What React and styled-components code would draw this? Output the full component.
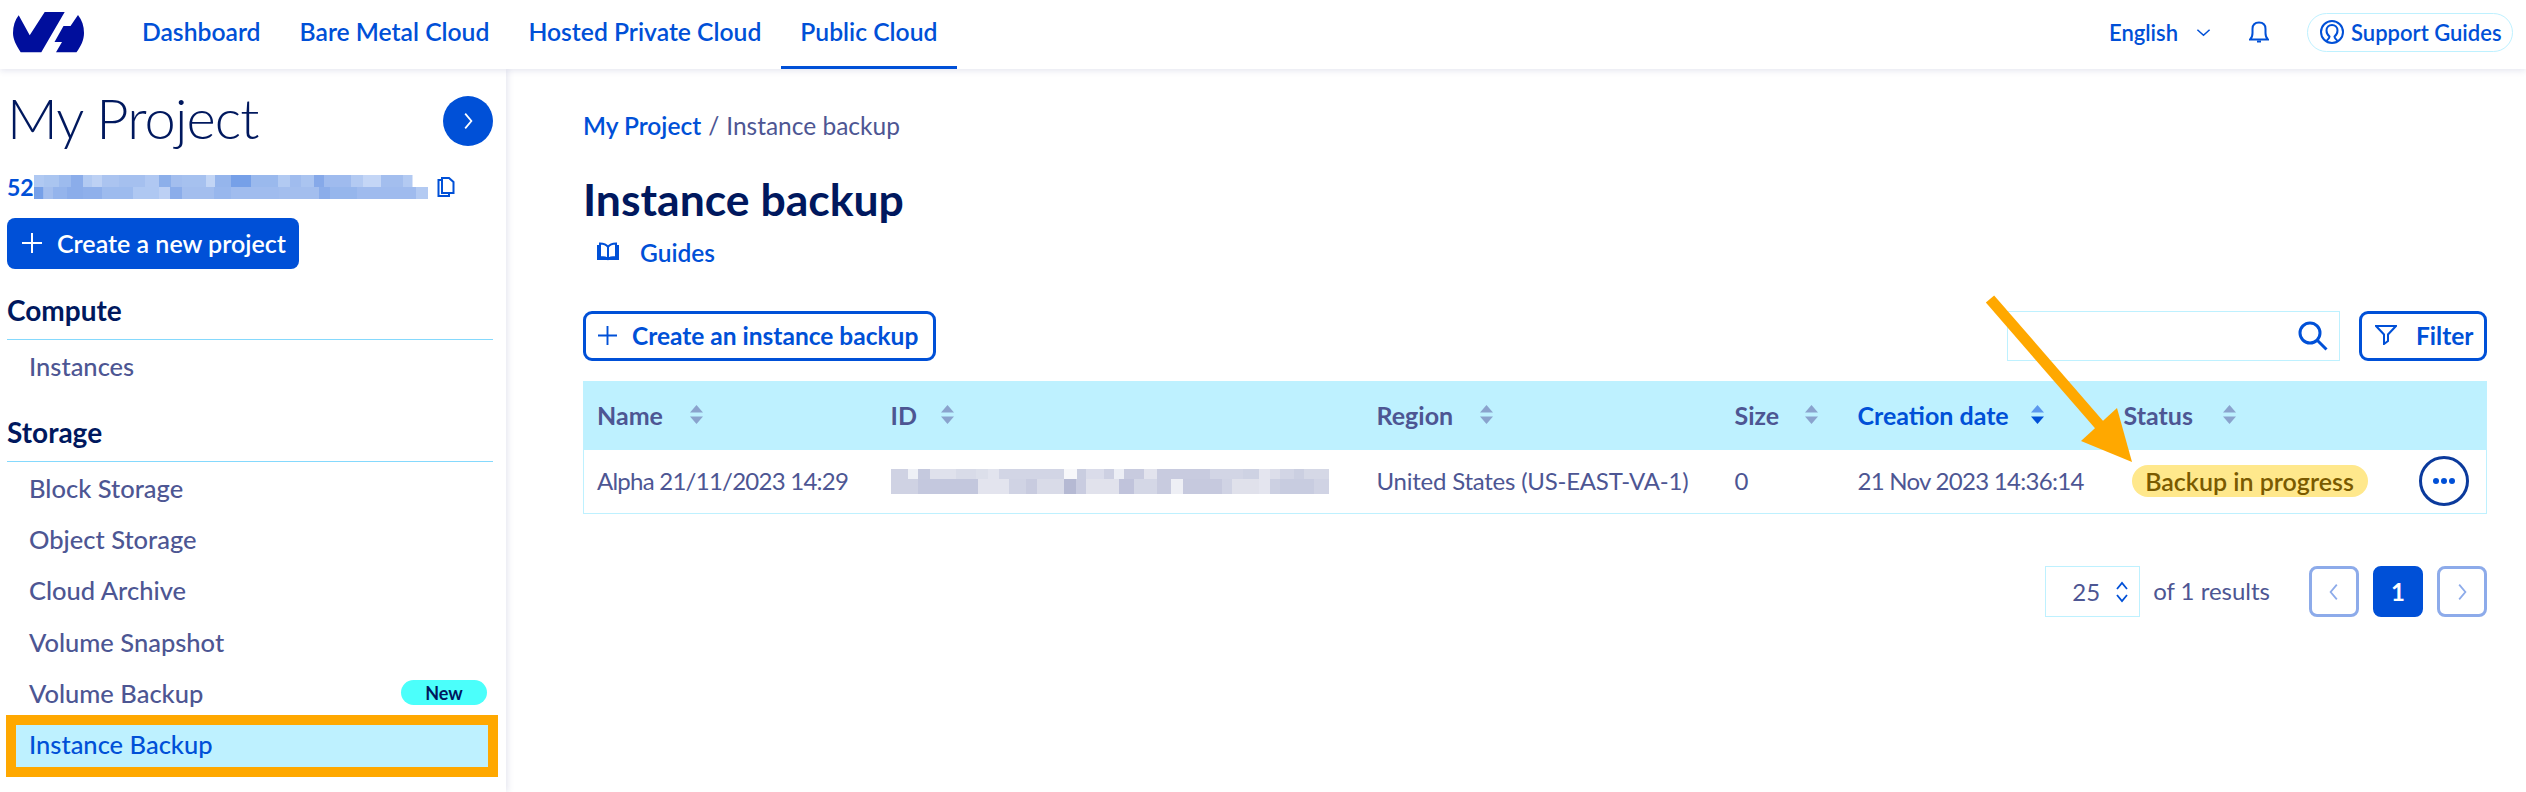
import React from 'react';
import styled, { createGlobalStyle } from 'styled-components';

const BLUE = '#0050d7';
const NAVY = '#00185e';
const SLATE = '#4d5693';
const SKY = '#bef1ff';
const ORANGE = '#ffa800';

const Global = createGlobalStyle`
  html, body { margin: 0; padding: 0; background: #fff; }
  body { font-family: Lato, "Noto Sans", sans-serif; color: ${SLATE}; overflow: hidden; }
  * { box-sizing: border-box; }
`;

const Page = styled.div`
  position: relative;
  width: 2526px;
  height: 792px;
  overflow: hidden;
`;

const TopBar = styled.header`
  position: relative;
  z-index: 2;
  display: flex;
  align-items: center;
  height: 69px;
  padding: 0 13px;
  background: #fff;
  box-shadow: 0 2px 6px rgba(77, 86, 147, 0.14);
`;

const Logo = styled.svg`
  width: 71px;
  height: 42px;
  margin: 0 38.5px 4px 0;
  flex: none;
`;

const NavItem = styled.a`
  display: flex;
  align-items: center;
  height: 69px;
  padding: 0 19.5px 3px;
  font-size: 24.7px;
  font-weight: 600;
  color: ${BLUE};
  border-bottom: 3px solid ${(p) => (p.$active ? BLUE : 'transparent')};
`;

const TopRight = styled.div`
  display: flex;
  align-items: center;
  margin-left: auto;
  padding-bottom: 5px;
`;

const Lang = styled.span`
  font-size: 22px;
  font-weight: 600;
  color: ${BLUE};
  display: flex;
  align-items: center;
  gap: 18px;
`;

const BellIcon = styled.svg`
  margin: 0 38px;
`;

const Pill = styled.a`
  display: flex;
  align-items: center;
  gap: 7px;
  height: 39px;
  width: 206px;
  padding-left: 12px;
  border: 1px solid ${SKY};
  border-radius: 20px;
  font-size: 22px;
  font-weight: 600;
  color: ${BLUE};
`;

const Body = styled.div`
  display: flex;
  height: 723px;
`;

const Side = styled.aside`
  width: 506px;
  flex: none;
  padding: 0 13px 0 7px;
  box-shadow: 2px 0 6px rgba(77, 86, 147, 0.14);
`;

const ProjectRow = styled.div`
  display: flex;
  align-items: center;
  justify-content: space-between;
  height: 51px;
  margin-top: 26px;
`;

const ProjectName = styled.h1`
  margin: -6px 0 0;
  font-size: 56px;
  font-weight: 300;
  letter-spacing: -0.9px;
  color: ${NAVY};
`;

const RoundBtn = styled.span`
  width: 50px;
  height: 50px;
  border-radius: 50%;
  background: ${BLUE};
  display: flex;
  align-items: center;
  justify-content: center;
`;

const IdRow = styled.div`
  display: flex;
  align-items: center;
  height: 24px;
  margin-top: 29px;
  font-size: 23px;
  font-weight: 700;
  color: ${BLUE};
`;

const CopyIcon = styled.svg`
  margin-left: 9px;
`;

const SideCreate = styled.a`
  display: inline-flex;
  align-items: center;
  gap: 15px;
  width: 292px;
  height: 51px;
  margin-top: 19px;
  padding: 0 0 2px 15px;
  border-radius: 8px;
  background: ${BLUE};
  color: #fff;
  font-size: 25px;
  font-weight: 600;
`;

const GroupTitle = styled.div`
  display: flex;
  align-items: center;
  height: 58px;
  margin-top: ${(p) => p.$top}px;
  padding: 0 0 2px 0;
  border-bottom: 1px solid #85d9fd;
  font-size: 28px;
  font-weight: 700;
  color: ${NAVY};
`;

const SideItem = styled.a`
  display: flex;
  align-items: center;
  justify-content: space-between;
  height: ${(p) => (p.$active ? 42 : 51.25)}px;
  padding: ${(p) => (p.$active ? '0 0 3px 13px' : '0 6px 0 22px')};
  margin: ${(p) => (p.$active ? '6px 5px 0 9px' : 0)};
  font-size: 25.5px;
  font-weight: 500;
  color: ${(p) => (p.$active ? BLUE : SLATE)};
  background: ${(p) => (p.$active ? SKY : 'transparent')};
  box-shadow: ${(p) => (p.$active ? `0 0 0 10px ${ORANGE}` : 'none')};
`;

const NewBadge = styled.span`
  display: flex;
  align-items: center;
  justify-content: center;
  width: 86px;
  height: 25px;
  border-radius: 13px;
  background: #4bfffb;
  color: ${NAVY};
  font-size: 18px;
  font-weight: 700;
`;

const Main = styled.main`
  flex: 1;
  padding: 41px 39px 0 77px;
`;

const Crumbs = styled.div`
  height: 30px;
  display: flex;
  align-items: center;
  gap: 7px;
  font-size: 24.5px;
`;

const CrumbLink = styled.a`
  color: ${BLUE};
  font-weight: 600;
`;

const PageTitle = styled.h2`
  margin: 32px 0 0;
  font-size: 44.5px;
  line-height: 54px;
  font-weight: 700;
  color: ${NAVY};
`;

const GuideLink = styled.a`
  display: flex;
  align-items: center;
  gap: 21px;
  height: 30px;
  margin: 11px 0 0 14px;
  font-size: 24.5px;
  font-weight: 600;
  color: ${BLUE};
`;

const Toolbar = styled.div`
  display: flex;
  align-items: center;
  height: 50px;
  margin-top: 44px;
`;

const OutlineBtn = styled.a`
  display: flex;
  align-items: center;
  height: 50px;
  width: ${(p) => p.$w}px;
  gap: ${(p) => p.$gap}px;
  padding: 0 0 2px ${(p) => p.$pad}px;
  border: 3px solid ${BLUE};
  border-radius: 9px;
  font-size: 24.5px;
  font-weight: 700;
  color: ${BLUE};
`;

const Search = styled.div`
  display: flex;
  align-items: center;
  justify-content: flex-end;
  width: 333px;
  height: 50px;
  margin: 0 19px 0 auto;
  padding-right: 11px;
  border: 1px solid ${SKY};
`;

const Table = styled.table`
  width: 100%;
  margin-top: 20px;
  border-collapse: collapse;
  table-layout: fixed;
  border: 1px solid ${SKY};
`;

const Head = styled.th`
  height: 68px;
  padding: 0 0 2px 13px;
  background: ${SKY};
  text-align: left;
  font-size: 25px;
  font-weight: 700;
  color: ${(p) => (p.$sorted ? BLUE : SLATE)};
`;

const HeadInner = styled.span`
  display: inline-flex;
  align-items: center;
  gap: ${(p) => p.$gap}px;
`;

const Cell = styled.td`
  height: 64px;
  padding: 0 0 ${(p) => (p.$text ? 2 : 0)}px 13px;
  font-size: 24px;
  letter-spacing: ${(p) => p.$spacing || 0}px;
  color: ${SLATE};
`;

const StatusBadge = styled.span`
  display: inline-flex;
  align-items: center;
  justify-content: center;
  width: 236px;
  height: 32px;
  margin-left: 8px;
  padding-bottom: 1px;
  border-radius: 16px;
  background: #ffe88c;
  color: #7a5a00;
  font-size: 25px;
  font-weight: 600;
`;

const DotsBtn = styled.span`
  display: flex;
  align-items: center;
  justify-content: center;
  width: 50px;
  height: 50px;
  border: 3px solid #0b3a9c;
  border-radius: 50%;
`;

const Pager = styled.div`
  display: flex;
  align-items: center;
  justify-content: flex-end;
  height: 51px;
  margin-top: 52px;
`;

const PageSize = styled.div`
  display: flex;
  align-items: center;
  justify-content: flex-end;
  gap: 15px;
  width: 95px;
  height: 51px;
  padding-right: 10px;
  border: 1px solid ${SKY};
  font-size: 24px;
`;

const ResultCount = styled.span`
  margin: 0 39px 2px 13px;
  font-size: 24px;
`;

const PageBtn = styled.span`
  display: flex;
  align-items: center;
  justify-content: center;
  width: 50px;
  height: 51px;
  margin-left: ${(p) => p.$left}px;
  border: 3px solid ${(p) => (p.$on ? BLUE : '#8dabea')};
  border-radius: 8px;
  background: ${(p) => (p.$on ? BLUE : '#fff')};
  color: #fff;
  font-size: 24px;
  font-weight: 700;
`;

const MosaicSvg = styled.svg`
  display: block;
`;

const Annotation = styled.svg`
  position: absolute;
  left: 0;
  top: 0;
  z-index: 3;
  pointer-events: none;
`;

const sideTop = [
  [28, '#b0c9f2'], [47, '#aac5f0'], [36, '#9dbbee'], [36, '#8badea'], [27, '#b2caf2'], [30, '#bdd1f4'],
  [51, '#abc4f0'], [78, '#a5c0ef'], [42, '#b0c8f2'], [36, '#8cafea'], [33, '#a3beee'], [72, '#a6c1ef'],
  [27, '#c2d5f5'], [48, '#95b5ec'], [60, '#76a0e8'], [81, '#9ab9ed'], [36, '#b2caf2'], [33, '#a0bcee'],
  [39, '#aac4f0'], [30, '#86a9e9'], [81, '#9fbbee'], [36, '#b3caf2'], [54, '#c4d6f6'], [66, '#a3beee'], [27, '#b3caf2'],
];
const sideBottom = [
  [28, '#76a0e8'], [29, '#a3beee'], [42, '#94b4ec'], [48, '#8badea'], [57, '#8fb0eb'], [93, '#9dbbee'],
  [78, '#afc8f2'], [33, '#bcd0f4'], [36, '#8badea'], [96, '#a3beee'], [51, '#98b7ed'], [144, '#a0bcee'],
  [120, '#a3beee'], [33, '#8badea'], [81, '#96b6ec'], [177, '#9fbbee'], [36, '#b3caf2'],
];
const rowTop = [
  [51, '#cfd2e3'], [30, '#eef0f6'], [36, '#c5c9de'], [78, '#dfe1ec'], [60, '#d8dbe8'], [36, '#dcdfea'],
  [33, '#e2e4ee'], [195, '#d2d5e5'], [39, '#f7f7fa'], [27, '#c9cde0'], [54, '#dadcea'], [30, '#cdd0e2'],
  [30, '#eceef5'], [60, '#c8cbdf'], [39, '#e2e3ed'], [159, '#c8cbdf'], [99, '#d2d5e5'], [48, '#ced2e3'],
  [33, '#e4e5ef'], [30, '#dcdeea'], [42, '#d2d5e5'], [30, '#cbcfe1'], [75, '#d5d8e6'],
];
const rowBottom = [
  [81, '#cfd2e3'], [66, '#c4c8de'], [114, '#c3c7dd'], [93, '#e3e4ee'], [51, '#d0d3e4'], [33, '#c8cbdf'],
  [81, '#d9dbe8'], [36, '#b5b9d3'], [30, '#c9cce0'], [99, '#e1e2ec'], [45, '#c0c3db'], [69, '#d4d7e6'],
  [42, '#c8cbdf'], [36, '#eeeff5'], [117, '#c6c9de'], [30, '#d0d3e4'], [81, '#e0e1eb'], [33, '#e4e5ef'],
  [30, '#ccd0e2'], [102, '#c8cce0'], [45, '#d0d3e4'],
];

// the blurred-out identifiers, drawn as two rows of tiles
function Mosaic({ top, bottom, width, height, split }) {
  const tiles = (row, y, h) => {
    let x = 0;
    return row.map(([w, fill], i) => {
      const rect = <rect key={`${y}-${i}`} x={x / 3} y={y} width={w / 3 + 0.5} height={h} fill={fill} />;
      x += w;
      return rect;
    });
  };
  return (
    <MosaicSvg width={width} height={height} viewBox={`0 0 ${width} ${height}`}>
      {tiles(top, 0, split)}
      {tiles(bottom, split, height - split)}
    </MosaicSvg>
  );
}

const OvhLogo = () => (
  <Logo viewBox="0 0 71 42">
    <path
      fill="#000e9c"
      d="M5.7 3.3 L16.7 23.3 L31.7 0 L51.7 0 L28.3 40.3 L7.7 40.3 C3 33 0 27 0 21 C0 14 2 8 5.7 3.3 Z"
    />
    <path
      fill="#000e9c"
      d="M65 3 L57.5 14 L50.5 14 L41.5 30 L49 30 L43 40.3 L63.5 40.3 C68 34 71 28 71 21 C71 14 69 8 65 3 Z"
    />
  </Logo>
);

const Plus = ({ color, size }) => (
  <svg width={size} height={size} viewBox="0 0 20 20" fill="none" stroke={color} strokeWidth="2">
    <path d="M10 0v20M0 10h20" />
  </svg>
);

const Chevron = ({ dir, color, size }) => (
  <svg width={size} height={size} viewBox="0 0 16 16" fill="none" stroke={color} strokeWidth="1.6">
    {dir === 'right' && <path d="M5.5 1.5 L11 8 L5.5 14.5" />}
    {dir === 'left' && <path d="M10.5 1.5 L5 8 L10.5 14.5" />}
    {dir === 'down' && <path d="M1.5 5 L8 11 L14.5 5" />}
  </svg>
);

const Sort = ({ active }) => (
  <svg width="13" height="19" viewBox="0 0 13 19">
    <path d="M6.5 0 L13 7.5 H0 Z" fill={active ? '#5b98ee' : '#8aa3cd'} />
    <path d="M0 11.5 H13 L6.5 19 Z" fill={active ? BLUE : '#8aa3cd'} />
  </svg>
);

const columns = [
  ['Name', 294, 27], ['ID', 486, 24], ['Region', 358, 27], ['Size', 123, 26], ['Creation date', 266, 22, true], ['Status', 295, 30],
];

export default function App() {
  return (
    <Page>
      <Global />
      <TopBar>
        <OvhLogo />
        <NavItem>Dashboard</NavItem>
        <NavItem>Bare Metal Cloud</NavItem>
        <NavItem>Hosted Private Cloud</NavItem>
        <NavItem $active>Public Cloud</NavItem>
        <TopRight>
          <Lang>
            English
            <Chevron dir="down" color={BLUE} size={15} />
          </Lang>
          <BellIcon width="20" height="22" viewBox="0 0 20 22" fill="none" stroke={BLUE} strokeWidth="2">
            <path d="M1 18.5 C3 17 3.5 15 3.5 12 V8 C3.5 4 6 1.5 10 1.5 C14 1.5 16.5 4 16.5 8 V12 C16.5 15 17 17 19 18.5 Z" />
            <path d="M8 20.5 H12" />
          </BellIcon>
          <Pill>
            <svg width="24" height="24" viewBox="0 0 24 24" fill="none" stroke={BLUE} strokeWidth="2">
              <circle cx="12" cy="12" r="11" />
              <path d="M6.5 21 C8 19 9.5 18.5 9.5 16.5 C7.5 15 6.5 13 6.5 10.5 C6.5 7 9 5 12 5 C15 5 17.5 7 17.5 10.5 C17.5 13 16.5 15 14.5 16.5 C14.5 18.5 16 19 17.5 21" />
            </svg>
            Support Guides
          </Pill>
        </TopRight>
      </TopBar>
      <Body>
        <Side>
          <ProjectRow>
            <ProjectName>My Project</ProjectName>
            <RoundBtn>
              <Chevron dir="right" color="#fff" size={18} />
            </RoundBtn>
          </ProjectRow>
          <IdRow>
            52
            <Mosaic top={sideTop} bottom={sideBottom} width={394} height={24} split={12} />
            <CopyIcon width="18" height="20" viewBox="0 0 18 20" fill="none" stroke={BLUE} strokeWidth="2">
              <path d="M5 3 H1.5 V19 H12 V16" />
              <path d="M5 1 H12 L16.5 5 V16 H5 Z" />
            </CopyIcon>
          </IdRow>
          <SideCreate>
            <Plus color="#fff" size={20} />
            Create a new project
          </SideCreate>
          <GroupTitle $top={13}>Compute</GroupTitle>
          <SideItem>Instances</SideItem>
          <GroupTitle $top={13}>Storage</GroupTitle>
          <SideItem>Block Storage</SideItem>
          <SideItem>Object Storage</SideItem>
          <SideItem>Cloud Archive</SideItem>
          <SideItem>Volume Snapshot</SideItem>
          <SideItem>
            Volume Backup
            <NewBadge>New</NewBadge>
          </SideItem>
          <SideItem $active>Instance Backup</SideItem>
        </Side>
        <Main>
          <Crumbs>
            <CrumbLink>My Project</CrumbLink> / <span>Instance backup</span>
          </Crumbs>
          <PageTitle>Instance backup</PageTitle>
          <GuideLink>
            <svg width="22" height="20" viewBox="0 0 22 20" fill="none" stroke={BLUE} strokeWidth="2">
              <path d="M3 4 H1 V17 H21 V4 H19" />
              <path d="M3 1.5 C6 1.5 9 2 11 5 C13 2 16 1.5 19 1.5 V15 C16 15 13 15 11 17 C9 15 6 15 3 15 Z" />
              <path d="M11 5 V17" />
            </svg>
            Guides
          </GuideLink>
          <Toolbar>
            <OutlineBtn $w={353} $gap={15} $pad={12}>
              <Plus color={BLUE} size={19} />
              Create an instance backup
            </OutlineBtn>
            <Search>
              <svg width="30" height="30" viewBox="0 0 30 30" fill="none" stroke={BLUE} strokeWidth="3">
                <circle cx="12" cy="12" r="10" />
                <path d="M19.5 19.5 L28.5 28.5" />
              </svg>
            </Search>
            <OutlineBtn $w={128} $gap={19} $pad={13}>
              <svg width="22" height="20" viewBox="0 0 22 20" fill="none" stroke={BLUE} strokeWidth="2">
                <path d="M1 1 H21 L13 9.5 V16 L9 19 V9.5 Z" />
              </svg>
              Filter
            </OutlineBtn>
          </Toolbar>
          <Table>
            <colgroup>
              {columns.map(([name, w]) => (
                <col key={name} width={w} />
              ))}
              <col />
            </colgroup>
            <thead>
              <tr>
                {columns.map(([name, , gap, sorted]) => (
                  <Head key={name} $sorted={sorted}>
                    <HeadInner $gap={gap}>
                      {name}
                      <Sort active={sorted} />
                    </HeadInner>
                  </Head>
                ))}
                <Head />
              </tr>
            </thead>
            <tbody>
              <tr>
                <Cell $text $spacing={-0.75}>Alpha 21/11/2023 14:29</Cell>
                <Cell>
                  <Mosaic top={rowTop} bottom={rowBottom} width={438} height={25} split={10} />
                </Cell>
                <Cell $text $spacing={-0.23}>United States (US-EAST-VA-1)</Cell>
                <Cell $text>0</Cell>
                <Cell $text $spacing={-0.72}>21 Nov 2023 14:36:14</Cell>
                <Cell>
                  <StatusBadge>Backup in progress</StatusBadge>
                </Cell>
                <Cell>
                  <DotsBtn>
                    <svg width="22" height="6" viewBox="0 0 22 6" fill={BLUE}>
                      <circle cx="3" cy="3" r="3" />
                      <circle cx="11" cy="3" r="3" />
                      <circle cx="19" cy="3" r="3" />
                    </svg>
                  </DotsBtn>
                </Cell>
              </tr>
            </tbody>
          </Table>
          <Pager>
            <PageSize>
              25
              <svg width="14" height="22" viewBox="0 0 14 22" fill="none" stroke={BLUE} strokeWidth="1.8">
                <path d="M2 8 L7 2 L12 8" />
                <path d="M2 14 L7 20 L12 14" />
              </svg>
            </PageSize>
            <ResultCount>of 1 results</ResultCount>
            <PageBtn $left={0}>
              <Chevron dir="left" color="#8dabea" size={18} />
            </PageBtn>
            <PageBtn $left={14} $on>1</PageBtn>
            <PageBtn $left={14}>
              <Chevron dir="right" color="#8dabea" size={18} />
            </PageBtn>
          </Pager>
        </Main>
      </Body>
      <Annotation width="2526" height="792" viewBox="0 0 2526 792">
        <path d="M1990 299 L2102 428" stroke={ORANGE} strokeWidth="11" fill="none" />
        <path d="M2117 408 L2081 441 L2132 462 Z" fill={ORANGE} />
      </Annotation>
    </Page>
  );
}
